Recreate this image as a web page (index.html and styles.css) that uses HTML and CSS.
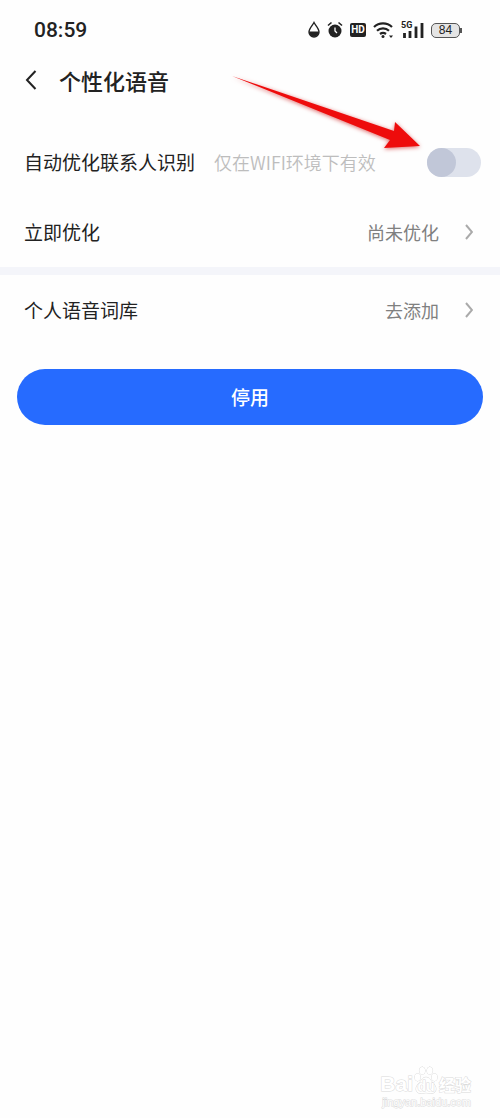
FILE: index.html
```html
<!DOCTYPE html>
<html lang="zh-CN">
<head>
<meta charset="utf-8">
<meta name="viewport" content="width=device-width, initial-scale=1">
<title>个性化语音</title>
<link rel="stylesheet" href="styles.css">
</head>
<body>
<div class="screen">
  <div class="status">
    <span class="time">08:59</span>
    <div class="status-icons">
      <svg width="12" height="18" viewBox="0 0 12 18" aria-hidden="true"><path d="M6 1.500C4.500 4.500 1 7.500 1 11a5 5 0 0 0 10 0C11 7.500 7.500 4.500 6 1.500Z" fill="none" stroke="#222" stroke-width="1.400"/><path d="M1 10.500h10a5 5 0 0 1-10 .500Z" fill="#222"/></svg>
      <svg width="16" height="18" viewBox="0 0 16 18" aria-hidden="true"><circle cx="8" cy="10" r="6.500" fill="#222"/><path d="M1 4.500 4.500 1.500M15 4.500 11.500 1.500" stroke="#222" stroke-width="1.600"/><path d="M8 6.500V10l2 2" fill="none" stroke="#fff" stroke-width="1.300"/></svg>
      <span class="hd">HD</span>
      <svg width="21" height="18" viewBox="0 0 21 18" aria-hidden="true"><g fill="none" stroke="#222" stroke-width="2.200"><path d="M1 6a13 13 0 0 1 18 0"/><path d="M4 9.800a8.500 8.500 0 0 1 12 0"/><path d="M7 13a5 5 0 0 1 6 0"/></g><circle cx="10" cy="15.500" r="1.500" fill="#222"/><path d="M16 14.500h4L18 17Z" fill="#222"/></svg>
      <span class="signal"><span class="net">5G</span><svg width="23" height="16" viewBox="0 0 23 16" aria-hidden="true"><path d="M3.500 11V16M9 9V16M15 4.500V16M21 1V16" stroke="#222" stroke-width="2.800"/></svg></span>
      <span class="battery">84</span>
    </div>
  </div>
  <header class="header">
    <button class="back" type="button" aria-label="返回"><svg width="12" height="20" viewBox="0 0 12 20"><path d="M10.500 1 2 10l8.500 9" fill="none" stroke="#222" stroke-width="2"/></svg></button>
    <h1 class="title">个性化语音</h1>
  </header>
  <main>
    <div class="row">
      <label class="label" for="auto">自动优化联系人识别</label>
      <span class="hint">仅在WIFI环境下有效</span>
      <input class="switch" id="auto" type="checkbox" role="switch">
    </div>
    <button class="row" type="button">
      <span class="label">立即优化</span><span class="value">尚未优化</span>
      <svg class="chevron" width="8" height="16" viewBox="0 0 8 16" aria-hidden="true"><path d="m1 1 6 7-6 7"/></svg>
    </button>
    <div class="divider"></div>
    <button class="row" type="button">
      <span class="label">个人语音词库</span><span class="value">去添加</span>
      <svg class="chevron" width="8" height="16" viewBox="0 0 8 16" aria-hidden="true"><path d="m1 1 6 7-6 7"/></svg>
    </button>
    <button class="disable" type="button">停用</button>
  </main>
  <svg class="arrow" width="200" height="84" viewBox="0 0 200 84" aria-hidden="true"><path d="M4 4 166 59l1-9 25 24-36 2 6-8Z" fill="#ee0c0c"/></svg>
  <footer class="mark">
    <div class="brand"><span>Bai</span><span class="paw"><svg width="26" height="30" viewBox="0 0 26 32" aria-hidden="true"><g fill="#fff" stroke="#d2d2d2"><ellipse cx="4" cy="12" rx="3" ry="4"/><ellipse cx="9" cy="5" rx="3" ry="4"/><ellipse cx="17" cy="5" rx="3" ry="4"/><ellipse cx="22" cy="12" rx="3" ry="4"/><path d="M13 12c-4 0-5 4-8 7-5 5-2 11 3 10q5-1 10 0c5 1 8-5 3-10-3-3-4-7-8-7Z"/></g></svg><span class="du">du</span></span><span class="exp">经验</span></div>
    <div class="site">jingyan.baidu.com</div>
  </footer>
</div>
</body>
</html>
```
FILE: styles.css
```css
* { box-sizing: border-box; }
body {
  margin: 0;
  background: #fefefe;
  color: #222;
  font-family: "Noto Sans CJK SC", sans-serif;
}
button { border: 0; background: none; color: inherit; font: inherit; }
.screen {
  position: relative;
  display: flex;
  flex-direction: column;
  min-height: 100vh;
}
.status {
  display: flex;
  align-items: center;
  justify-content: space-between;
  height: 60px;
  padding: 0 40px 0 34px;
}
.time { font: 500 21px/24px Roboto, sans-serif; }
.status-icons { display: flex; align-items: center; gap: 7px; }
.hd {
  width: 16px;
  border-radius: 2px;
  background: #222;
  color: #fff;
  font: 700 10px/14px Roboto, sans-serif;
  text-align: center;
}
.signal { position: relative; display: flex; width: 23px; }
.net {
  position: absolute;
  top: -1px;
  left: 0;
  background: #fefefe;
  font: 700 9px/9px Roboto, sans-serif;
}
.battery {
  position: relative;
  width: 29px;
  border: 1px solid #555;
  border-radius: 5px;
  background: #e4e4e4;
  font: 12px/13px "Liberation Sans", sans-serif;
  text-align: center;
}
.battery::after {
  content: "";
  position: absolute;
  top: 4px;
  right: -3px;
  width: 2px;
  height: 5px;
  background: #555;
}
.header {
  display: flex;
  align-items: center;
  gap: 22px;
  height: 40px;
  margin-bottom: 27px;
  padding: 0 25px;
}
.back { display: flex; padding: 0; }
.title { margin: 0; font-size: 22px; line-height: 32px; font-weight: 500; }
.row {
  display: flex;
  align-items: center;
  width: 100%;
  height: 70px;
  padding: 0 24px;
  text-align: left;
}
.label { font-size: 19px; line-height: 28px; }
.hint { margin-left: 19px; color: #bdbdbd; font-size: 18px; line-height: 28px; font-weight: 350; }
.switch {
  appearance: none;
  width: 54px;
  height: 29px;
  margin: 0 -5px 0 auto;
  border-radius: 15px;
  background: #dee2ec;
}
.switch::before {
  content: "";
  display: block;
  width: 29px;
  height: 29px;
  border-radius: 50%;
  background: #c1c7d8;
}
.switch:checked::before { margin-left: auto; }
.value { margin-left: auto; color: #808080; font-size: 18px; line-height: 28px; }
.chevron { margin: 0 3px 0 26px; fill: none; stroke: #aaa; stroke-width: 2; }
.divider { height: 8px; background: #f4f5fa; }
.disable {
  display: block;
  width: calc(100% - 34px);
  height: 56px;
  margin: 24px 17px;
  padding: 0;
  border-radius: 28px;
  background: #266bff;
  color: #fff;
  font-size: 19px;
  line-height: 28px;
  font-weight: 500;
}
.arrow {
  position: absolute;
  top: 72px;
  right: 72px;
  filter: drop-shadow(0 1px 2px #d66);
  pointer-events: none;
}
.mark {
  margin-top: auto;
  padding: 0 29px 10px;
  color: #fff;
  text-align: right;
  -webkit-text-stroke: 1px #dadada;
  paint-order: stroke;
}
.brand { display: flex; align-items: flex-end; justify-content: flex-end; font: 700 21px/24px "Liberation Sans", sans-serif; }
.paw { position: relative; display: flex; }
.du { position: absolute; left: 0; width: 26px; bottom: 2px; font-size: 14px; line-height: 16px; text-align: center; }
.exp { font: 700 16px/24px "Noto Sans CJK SC", sans-serif; }
.site { font: 11px/12px "Liberation Sans", sans-serif; }
```
